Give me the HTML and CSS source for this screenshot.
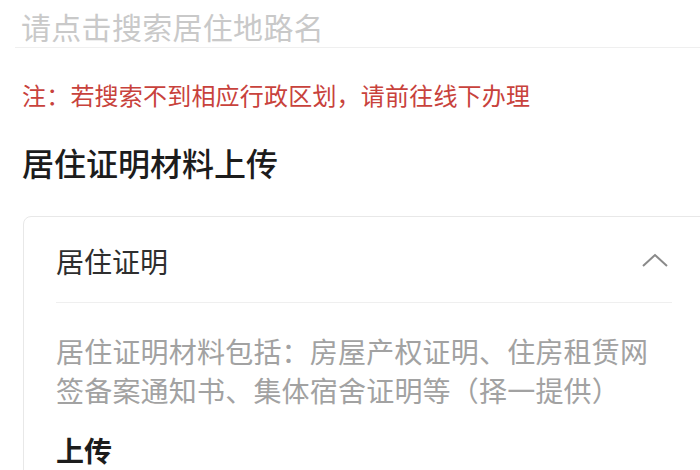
FILE: index.html
```html
<!DOCTYPE html>
<html lang="zh-CN">
<head>
    <meta charset="utf-8">
    <title>居住证明材料上传</title>
    <link rel="stylesheet" href="styles.css">
</head>
<body>
    <div class="search-row">请点击搜索居住地路名</div>

    <p class="note">注：若搜索不到相应行政区划，请前往线下办理</p>

    <h2 class="section-title">居住证明材料上传</h2>

    <div class="card">
        <div class="card-header">
            <span class="card-title">居住证明</span>
            <svg class="chevron" width="28" height="16" viewBox="0 0 28 16">
                <polyline points="2,14 14,3 26,14" fill="none" stroke="#8a8a8a" stroke-width="2"/>
            </svg>
        </div>
        <p class="card-desc">居住证明材料包括：房屋产权证明、住房租赁网<br>签备案通知书、集体宿舍证明等（择一提供）</p>
        <h3 class="upload-title">上传</h3>
    </div>
</body>
</html>
```

FILE: styles.css
```css
body {
    margin: 0;
    background-color: #ffffff;
    font-family: "Noto Sans CJK SC", "Noto Sans", sans-serif;
    overflow: hidden;
}

.search-row {
    margin-left: 15px;
    padding: 5px 0 0 6px;
    height: 42px;
    font-size: 30px;
    line-height: 42px;
    color: #c9c9c9;
    letter-spacing: 0.3px;
    border-bottom: 1px solid #efefef;
}

.note {
    margin: 31px 0 0 22px;
    font-size: 24px;
    line-height: 32px;
    color: #c8423c;
    letter-spacing: 0.2px;
}

.section-title {
    margin: 31px 0 0 22px;
    font-size: 32px;
    line-height: 40px;
    font-weight: 500;
    color: #1c1c1c;
}

.card {
    margin: 34px -20px 0 23px;
    padding: 0 47px 60px 32px;
    border: 1px solid #e8e8e8;
    border-radius: 8px;
}

.card-header {
    display: flex;
    align-items: center;
    justify-content: space-between;
    height: 85px;
    border-bottom: 1px solid #efefef;
}

.card-title {
    font-size: 28px;
    color: #2e2e2e;
    padding-top: 2px;
}

.chevron {
    margin-right: 3px;
}

.card-desc {
    margin: 29px 0 0 0;
    font-size: 28px;
    line-height: 39px;
    color: #a2a2a2;
    letter-spacing: 0.2px;
}

.upload-title {
    margin: 20px 0 0 0;
    font-size: 28px;
    line-height: 40px;
    font-weight: 700;
    color: #1c1c1c;
}
```
